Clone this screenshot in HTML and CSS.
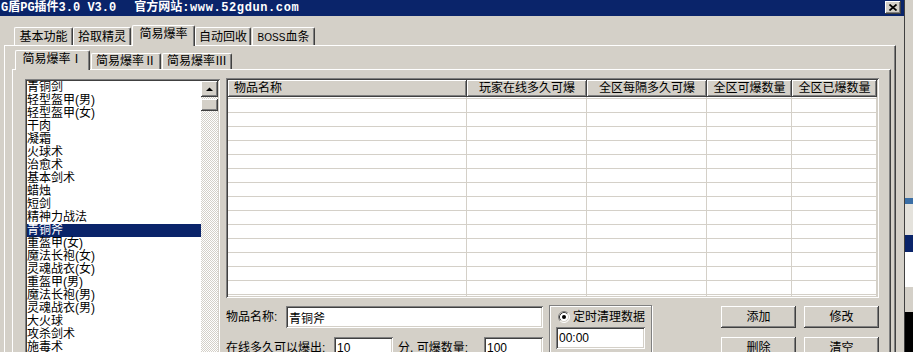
FILE: index.html
```html
<!DOCTYPE html>
<html lang="zh-CN">
<head>
  <meta charset="UTF-8">
  <title>G盾PG插件3.0</title>
  <link rel="stylesheet" href="styles.css">
</head>
<body>
  <div class="screen">
    <div class="window">
      <div class="titlebar">
        <span class="title">G盾PG插件3.0 V3.0<span class="t-site">官方网站<span class="url">:www.52gdun.com</span></span></span>
        <span class="close raised">
          <svg width="8" height="7" viewBox="0 0 8 7"><path d="M0.5 0.5L7.5 6.5M7.5 0.5L0.5 6.5" stroke="#000" stroke-width="1.7"/></svg>
        </span>
      </div>

      <div class="client">
        <div class="tabs outer-tabs">
          <div class="tab ot1">基本功能</div>
          <div class="tab ot2">拾取精灵</div>
          <div class="tab active ot3">简易爆率</div>
          <div class="tab ot4">自动回收</div>
          <div class="tab ot5"><span class="latin">BOSS</span>血条</div>
        </div>

        <div class="panel outer-panel">
          <div class="tabs inner-tabs">
            <div class="tab active it1">简易爆率Ⅰ</div>
            <div class="tab it2">简易爆率Ⅱ</div>
            <div class="tab it3">简易爆率Ⅲ</div>
          </div>

          <div class="panel inner-panel">
            <div class="listbox sunken">
              <ul class="items">
                <li>青铜剑</li>
                <li>轻型盔甲(男)</li>
                <li>轻型盔甲(女)</li>
                <li>干肉</li>
                <li>凝霜</li>
                <li>火球术</li>
                <li>治愈术</li>
                <li>基本剑术</li>
                <li>蜡烛</li>
                <li>短剑</li>
                <li>精神力战法</li>
                <li class="sel">青铜斧</li>
                <li>重盔甲(女)</li>
                <li>魔法长袍(女)</li>
                <li>灵魂战衣(女)</li>
                <li>重盔甲(男)</li>
                <li>魔法长袍(男)</li>
                <li>灵魂战衣(男)</li>
                <li>大火球</li>
                <li>攻杀剑术</li>
                <li>施毒术</li>
                <li>雷电术</li>
              </ul>
              <div class="vscroll">
                <div class="sb-btn raised">
                  <svg width="7" height="4" viewBox="0 0 7 4"><path d="M0 4H7L3.5 0.5Z" fill="#000"/></svg>
                </div>
                <div class="sb-thumb raised"></div>
              </div>
            </div>

            <div class="main">
              <div class="listview sunken">
                <div class="lv-head">
                  <div class="hcell c1 raised">物品名称</div>
                  <div class="hcell c2 raised">玩家在线多久可爆</div>
                  <div class="hcell c3 raised">全区每隔多久可爆</div>
                  <div class="hcell c4 raised">全区可爆数量</div>
                  <div class="hcell c5 raised">全区已爆数量</div>
                </div>
                <div class="lv-body">
                  <div class="col c1"></div>
                  <div class="col c2"></div>
                  <div class="col c3"></div>
                  <div class="col c4"></div>
                  <div class="col c5"></div>
                </div>
              </div>

              <div class="editor">
                <div class="fields">
                  <div class="row">
                    <span class="lbl l-name">物品名称:</span>
                    <input class="edit e-name" type="text" value="青铜斧">
                  </div>
                  <div class="row row2">
                    <span class="lbl l-time">在线多久可以爆出:</span>
                    <input class="edit e-small" type="text" value="10">
                    <span class="lbl l-count">分, 可爆数量:</span>
                    <input class="edit e-small" type="text" value="100">
                  </div>
                </div>

                <div class="group">
                  <div class="radio-row">
                    <svg width="12" height="12" viewBox="0 0 12 12">
                      <circle cx="6" cy="6" r="5" fill="#fff"/>
                      <path d="M2.11 9.89A5.5 5.5 0 0 1 9.89 2.11" fill="none" stroke="#808080"/>
                      <path d="M9.89 2.11A5.5 5.5 0 0 1 2.11 9.89" fill="none" stroke="#fff"/>
                      <path d="M2.82 9.18A4.5 4.5 0 0 1 9.18 2.82" fill="none" stroke="#404040"/>
                      <path d="M9.18 2.82A4.5 4.5 0 0 1 2.82 9.18" fill="none" stroke="#d4d0c8"/>
                      <circle cx="6" cy="6" r="2" fill="#000"/>
                    </svg>
                    <span>定时清理数据</span>
                  </div>
                  <input class="edit e-clock" type="text" value="00:00">
                </div>

                <div class="buttons">
                  <div class="btn raised">添加</div>
                  <div class="btn raised">修改</div>
                  <div class="btn raised">删除</div>
                  <div class="btn raised">清空</div>
                </div>
              </div>
            </div>
          </div>
        </div>
      </div>
    </div>

    <div class="behind">
      <div class="bh b1"></div>
      <div class="bh b2"></div>
      <div class="bh b3"></div>
      <div class="bh b4"></div>
      <div class="bh b5"></div>
      <div class="bh b6"></div>
      <div class="bh b7"></div>
    </div>
  </div>
</body>
</html>
```

FILE: styles.css
```css
* {
  box-sizing: border-box;
}
body {
  margin: 0;
  background: #d4d0c8;
  color: #000;
  font: 12px/13px "Liberation Sans", "Noto Sans CJK SC", sans-serif;
}
.screen {
  display: flex;
  width: 913px;
  height: 352px;
  overflow: hidden;
}

/* 3D edges */
.raised {
  background: #d4d0c8;
  box-shadow: inset -1px -1px #404040, inset 1px 1px #fff, inset -2px -2px #808080;
}
.sunken {
  padding: 2px;
  background: #fff;
  box-shadow: inset 1px 1px #808080, inset -1px -1px #fff, inset 2px 2px #404040, inset -2px -2px #d4d0c8;
}

/* window */
.window {
  flex: none;
  width: 905px;
  display: flex;
  flex-direction: column;
  background: #d4d0c8;
  border-right: 1px solid #404040;
}
.titlebar {
  flex: none;
  height: 16px;
  display: flex;
  justify-content: space-between;
  padding: 0 3px 0 1px;
  background: #0a246a;
  color: #fff;
}
.title {
  font: bold 12px/16px "Liberation Mono", "Noto Sans CJK SC", monospace;
  white-space: pre;
}
.t-site {
  margin-left: 18px;
}
.url {
  letter-spacing: 0.6px;
}
.close {
  width: 16px;
  height: 13px;
  margin-top: 1px;
  display: flex;
  align-items: center;
  justify-content: center;
}
.client {
  flex: 1;
  display: flex;
  flex-direction: column;
  padding: 9px 8px 0 4px;
}

/* tabs */
.tabs {
  flex: none;
  display: flex;
  align-items: flex-end;
  position: relative;
  z-index: 1;
}
.tab {
  flex: none;
  height: 18px;
  padding-top: 3px;
  text-align: center;
  white-space: nowrap;
  background: #d4d0c8;
  border-top: 1px solid #fff;
  border-left: 1px solid #fff;
  border-right: 1px solid #404040;
  border-radius: 2px 2px 0 0;
  box-shadow: inset -1px 0 #808080;
}
.tab.active {
  height: 21px;
  margin-bottom: -1px;
  padding-top: 2px;
}
.latin {
  font-size: 10px;
}
.outer-tabs {
  height: 20px;
  padding-left: 10px;
}
.ot1 { width: 59px; }
.ot2 { width: 58px; }
.ot3 { width: 63px; margin-left: 1px; }
.ot4 { width: 56px; }
.ot5 { width: 63px; margin-left: 1px; }

.inner-tabs {
  height: 19px;
  padding-left: 3px;
}
.inner-tabs .tab {
  height: 16px;
  padding-top: 1px;
}
.inner-tabs .tab.active {
  height: 20px;
  padding-top: 2px;
}
.it1 { width: 75px; }
.it2 { width: 70px; margin-left: 1px; }
.it3 { width: 70px; margin-left: 1px; }

/* panels */
.panel {
  background: #d4d0c8;
  border-top: 1px solid #fff;
  border-left: 1px solid #fff;
  border-right: 1px solid #404040;
  box-shadow: inset -1px 0 #808080;
}
.outer-panel {
  flex: 1;
  display: flex;
  flex-direction: column;
  padding: 4px 4px 0 7px;
}
.inner-panel {
  flex: 1;
  display: flex;
  align-items: flex-start;
  padding: 8px 0 0 12px;
}

/* list box */
.listbox {
  flex: none;
  width: 195px;
  height: 290px;
  margin-top: 1px;
  display: flex;
}
.items {
  flex: 1;
  margin: 0;
  padding: 0;
  list-style: none;
  overflow: hidden;
}
.items li {
  height: 13px;
  line-height: 13px;
  white-space: nowrap;
}
.items li.sel {
  background: #0a246a;
  color: #fff;
}
.vscroll {
  flex: none;
  width: 17px;
  display: flex;
  flex-direction: column;
  background: repeating-conic-gradient(#fff 0 25%, #d4d0c8 0 50%) 0 0 / 2px 2px;
}
.sb-btn {
  height: 16px;
  display: flex;
  align-items: center;
  justify-content: center;
}
.sb-thumb {
  height: 12px;
  margin-top: 2px;
}

/* list view */
.main {
  flex: none;
  width: 653px;
  margin-left: 6px;
  display: flex;
  flex-direction: column;
}
.listview {
  height: 220px;
  display: flex;
  flex-direction: column;
}
.lv-head {
  flex: none;
  height: 17px;
  display: flex;
}
.hcell {
  height: 17px;
  line-height: 17px;
  text-align: center;
  white-space: nowrap;
}
.hcell.c1 {
  text-align: left;
  padding-left: 6px;
}
.c1 { width: 239px; }
.c2 { width: 120px; }
.c3 { width: 120px; }
.c4 { width: 85px; }
.c5 { width: 85px; }
.lv-body {
  flex: 1;
  display: flex;
  background: #fff repeating-linear-gradient(#d4d0c8 0 1px, #fff 1px 14px) 0 1px;
}
.col {
  flex: none;
  border-right: 1px solid #d4d0c8;
}

/* bottom editor */
.editor {
  display: flex;
  align-items: flex-start;
  margin-top: 8px;
}
.fields {
  flex: none;
  width: 317px;
}
.row {
  height: 22px;
  display: flex;
  align-items: center;
}
.row2 {
  margin-top: 9px;
}
.lbl {
  flex: none;
  white-space: nowrap;
}
.l-name { width: 60px; }
.l-time { width: 108px; }
.l-count { width: 91px; padding-left: 5px; }
.edit {
  height: 22px;
  padding: 0 2px 0 3px;
  border: none;
  outline: none;
  font: inherit;
  color: #000;
  background: #fff;
  box-shadow: inset 1px 1px #808080, inset -1px -1px #fff, inset 2px 2px #404040, inset -2px -2px #d4d0c8;
}
.e-name { width: 257px; }
.e-small { width: 59px; }

.group {
  flex: none;
  width: 103px;
  height: 60px;
  margin: -1px 0 0 6px;
  padding: 5px 0 0 6px;
  border: 1px solid #808080;
  box-shadow: inset 1px 1px #fff, 1px 1px #fff;
}
.radio-row {
  display: flex;
  align-items: center;
  gap: 3px;
  height: 12px;
  padding-left: 2px;
}
.e-clock {
  display: block;
  width: 89px;
  margin-top: 4px;
}

.buttons {
  flex: none;
  display: grid;
  grid-template-columns: 75px 75px;
  column-gap: 8px;
  row-gap: 9px;
  margin-left: 69px;
}
.btn {
  height: 22px;
  line-height: 22px;
  text-align: center;
}

/* window behind, at the right edge */
.behind {
  flex: 1;
  display: flex;
  flex-direction: column;
}
.bh { flex: none; }
.b1 { height: 198px; background: #d4d0c8; }
.b2 { height: 6px; background: #3a6ea5; }
.b3 { height: 31px; background: #e4e2dc; }
.b4 { height: 17px; background: #0a246a; }
.b5 { height: 35px; background: #fff; }
.b6 { height: 25px; background: #d4d0c8; }
.b7 { flex: 1; background: #000; }
```
